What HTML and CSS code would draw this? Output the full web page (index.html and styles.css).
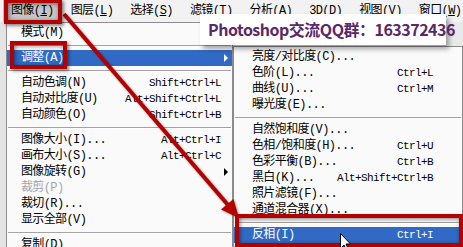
FILE: index.html
```html
<!DOCTYPE html>
<html lang="zh-CN">
  <head>
    <meta charset="UTF-8" />
    <title>图像 - 调整 - 反相</title>
    <link rel="stylesheet" href="styles.css">
  </head>
  <body>
    <div class="screen">
      <!-- menu bar -->
      <div class="menubar">
        <span class="mb-item active">图像(<u>I</u>)</span>
        <span class="mb-item">图层(<u>L</u>)</span>
        <span class="mb-item">选择(<u>S</u>)</span>
        <span class="mb-item">滤镜(<u>T</u>)</span>
        <span class="mb-item">分析(<u>A</u>)</span>
        <span class="mb-item">3D(<u>D</u>)</span>
        <span class="mb-item">视图(<u>V</u>)</span>
        <span class="mb-item">窗口(<u>W</u>)</span>
      </div>

      <div class="workspace">
        <div class="strip"></div>

        <!-- image menu -->
        <div class="menu menu-main">
          <div class="row"><span class="label">模式(M)</span><span class="more"></span></div>
          <div class="sep"></div>
          <div class="row hl"><span class="label">调整(A)</span><span class="more"></span></div>
          <div class="sep"></div>
          <div class="row"><span class="label">自动色调(N)</span><span class="keys">Shift+Ctrl+L</span><span class="gap"></span></div>
          <div class="row"><span class="label">自动对比度(U)</span><span class="keys">Alt+Shift+Ctrl+L</span><span class="gap"></span></div>
          <div class="row"><span class="label">自动颜色(O)</span><span class="keys">Shift+Ctrl+B</span><span class="gap"></span></div>
          <div class="sep"></div>
          <div class="row"><span class="label">图像大小(I)...</span><span class="keys">Alt+Ctrl+I</span><span class="gap"></span></div>
          <div class="row"><span class="label">画布大小(S)...</span><span class="keys">Alt+Ctrl+C</span><span class="gap"></span></div>
          <div class="row"><span class="label">图像旋转(G)</span><span class="more"></span></div>
          <div class="row off"><span class="label">裁剪(P)</span></div>
          <div class="row"><span class="label">裁切(R)...</span></div>
          <div class="row"><span class="label">显示全部(V)</span></div>
          <div class="sep"></div>
          <div class="row"><span class="label">复制(D)</span></div>
        </div>

        <!-- adjustments submenu -->
        <div class="menu menu-sub">
          <div class="row"><span class="label">亮度/对比度(C)...</span></div>
          <div class="row"><span class="label">色阶(L)...</span><span class="keys">Ctrl+L</span></div>
          <div class="row"><span class="label">曲线(U)...</span><span class="keys">Ctrl+M</span></div>
          <div class="row"><span class="label">曝光度(E)...</span></div>
          <div class="sep"></div>
          <div class="row"><span class="label">自然饱和度(V)...</span></div>
          <div class="row"><span class="label">色相/饱和度(H)...</span><span class="keys">Ctrl+U</span></div>
          <div class="row"><span class="label">色彩平衡(B)...</span><span class="keys">Ctrl+B</span></div>
          <div class="row"><span class="label">黑白(K)...</span><span class="keys">Alt+Shift+Ctrl+B</span></div>
          <div class="row"><span class="label">照片滤镜(F)...</span></div>
          <div class="row"><span class="label">通道混合器(X)...</span></div>
          <div class="sep"></div>
          <div class="row hl"><span class="label">反相(I)</span><span class="keys">Ctrl+I</span></div>
        </div>
      </div>

      <!-- annotations -->
      <div class="banner">Photoshop交流QQ群：163372436</div>

      <svg class="arrow" width="463" height="247" viewBox="0 0 463 247">
        <line x1="64" y1="14" x2="228" y2="205" />
        <polygon points="239,218 221,209.5 233.4,199" />
      </svg>

      <div class="mark mark-image"></div>
      <div class="mark mark-adjust"></div>
      <div class="mark mark-invert"></div>

      <svg class="cursor" width="12" height="19" viewBox="0 0 12 19">
        <path d="M0.5 0.5 L0.5 15.5 L4 12 L6.5 17.5 L8.5 16.5 L6 11 L10.5 11 Z" />
      </svg>
    </div>
  </body>
</html>
```

FILE: styles.css
```css
* {
  box-sizing: border-box;
}

body {
  margin: 0;
  background: #e9e9e9;
  font-family: "Liberation Mono", "Noto Sans CJK SC", monospace;
  font-size: 12px;
  color: #000;
}

.screen {
  position: relative;
  width: 463px;
  height: 247px;
  overflow: hidden;
  background: #e9e9e9;
}

/* menu bar */

.menubar {
  display: flex;
  gap: 1px;
  height: 22px;
  padding-left: 3px;
  background: #f2f2f2;
  line-height: 22px;
  letter-spacing: -0.6px;
  white-space: nowrap;
}

.mb-item {
  padding: 0 8px;
}

.mb-item.active {
  background: #c6c6c6;
}

/* menus */

.workspace {
  display: flex;
  align-items: flex-start;
}

.strip {
  width: 6px;
  height: 225px;
  background: #e4e4e4;
}

.menu {
  background: #fafafa;
  border: 1px solid #8c8c8c;
  padding-top: 2px;
  letter-spacing: -0.6px;
  white-space: nowrap;
}

.menu-main {
  width: 232px;
  height: 240px;
}

.menu-sub {
  width: 235px;
  height: 210px;
  margin-top: 24px;
}

.row {
  display: flex;
  align-items: center;
  height: 16px;
  line-height: 16px;
}

.menu-main .row {
  padding-left: 14px;
}

.menu-sub .row {
  padding: 0 29px 0 18px;
}

.label {
  flex: 1;
}

.keys {
  font-size: 11px;
  letter-spacing: -0.6px;
}

.gap,
.more {
  width: 11px;
  display: flex;
  justify-content: center;
}

.more::after {
  content: "";
  border-left: 4px solid #000;
  border-top: 4px solid transparent;
  border-bottom: 4px solid transparent;
}

.row.hl {
  background: #316ac5;
  color: #fff;
}

.row.hl .more::after {
  border-left-color: #fff;
}

.row.off {
  color: #a6a6a6;
}

.sep {
  height: 2px;
  margin: 4px 1px 3px;
  border-top: 1px solid #a3a3a3;
  border-bottom: 1px solid #fff;
}

/* annotations */

.banner {
  position: absolute;
  left: 200px;
  top: 14px;
  width: 246px;
  height: 31px;
  padding-left: 8px;
  background: #fff;
  box-shadow: 3px 4px 5px rgba(0, 0, 0, 0.35);
  color: #5a2868;
  font-family: "Noto Sans CJK SC", "Open Sans", sans-serif;
  font-weight: bold;
  font-size: 16px;
  letter-spacing: -0.5px;
  line-height: 31px;
  white-space: nowrap;
}

.arrow {
  position: absolute;
  left: 0;
  top: 0;
  filter: drop-shadow(1px 1px 1px rgba(0, 0, 0, 0.45));
}

.arrow line {
  stroke: #b50000;
  stroke-width: 4;
}

.arrow polygon {
  fill: #b50000;
}

.mark {
  position: absolute;
  border: 4px solid #b30000;
  box-shadow: 2px 2px 3px rgba(0, 0, 0, 0.45), inset 1px 1px 4px rgba(0, 0, 0, 0.5);
}

.mark-image {
  left: 4px;
  top: -1px;
  width: 58px;
  height: 25px;
}

.mark-adjust {
  left: 10px;
  top: 41px;
  width: 57px;
  height: 28px;
}

.mark-invert {
  left: 235px;
  top: 214px;
  width: 228px;
  height: 33px;
}

.cursor {
  position: absolute;
  left: 340px;
  top: 233px;
}

.cursor path {
  fill: #fff;
  stroke: #000;
  stroke-width: 1;
}
```
